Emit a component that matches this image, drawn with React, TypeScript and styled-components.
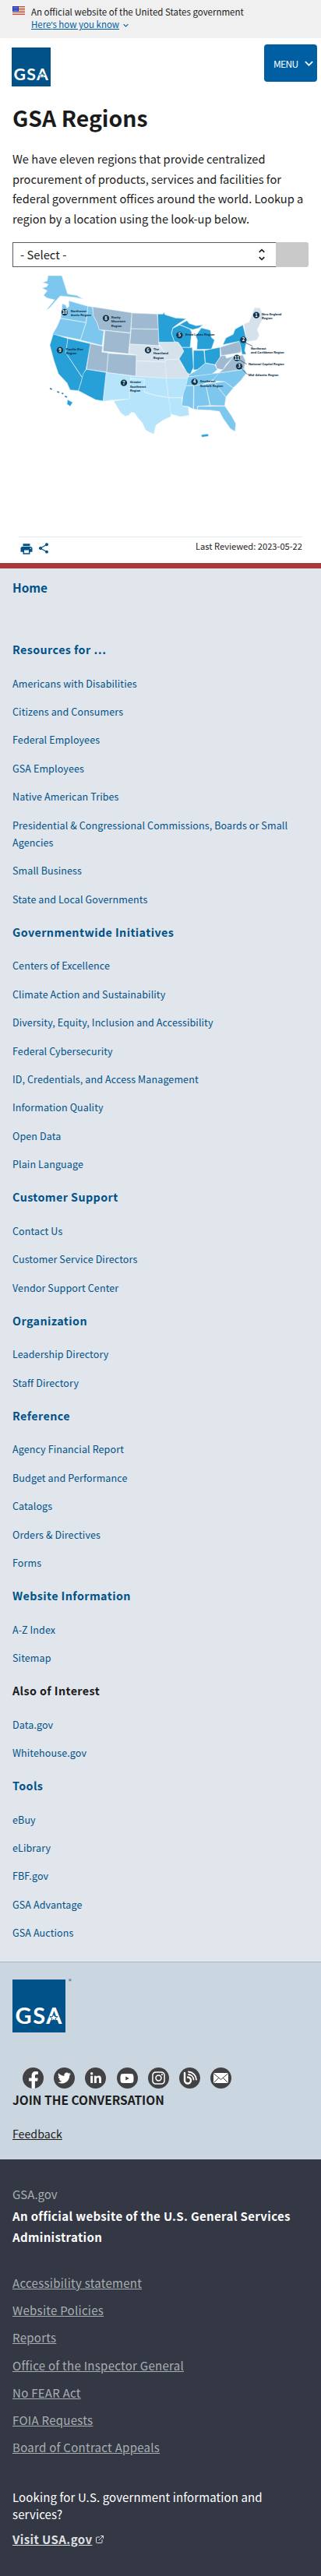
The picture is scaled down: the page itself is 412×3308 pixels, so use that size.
import React from "react";
import styled, { createGlobalStyle } from "styled-components";
import { MdPrint, MdShare, MdUnfoldMore, MdExpandMore } from "react-icons/md";
import { FaFacebookF, FaTwitter, FaLinkedinIn, FaYoutube, FaInstagram } from "react-icons/fa";
import { FiExternalLink } from "react-icons/fi";

const Global = createGlobalStyle`
  *{box-sizing:border-box}
  body{margin:0;background:#fff;color:#1b1b1b;font-family:"Noto Sans CJK SC","Noto Sans",sans-serif;}
  h1,h2,h3,p,ul{margin:0;padding:0}
  ul{list-style:none}
  a{color:inherit}
`;

const Banner = styled.header`
  height: 49px;
  background: #f0f0f0;
  padding: 7px 16px 0;
  display: flex;
  gap: 8px;
  font-size: 11.5px;
  line-height: 16.4px;
`;
const Flag = styled.svg`
  width: 16px;
  height: 11px;
  margin-top: 1px;
`;
const Know = styled.a`
  color: #005ea2;
  text-decoration: underline;
`;
const Apostrophe = styled.span`
  font-family: "Open Sans", sans-serif;
`;
const KnowRow = styled.div`
  display: flex;
  align-items: center;
  gap: 2px;
  color: #005ea2;
`;
const TopBar = styled.div`
  height: 71px;
  padding: 8px 5px 0 15px;
  display: flex;
  justify-content: space-between;
`;
const HeaderLogo = styled.div`
  margin-top: 4px;
`;
const MenuButton = styled.button`
  width: 68px;
  height: 48px;
  border: 0;
  border-radius: 4px;
  background: #005ea2;
  color: #fff;
  font: 12px "Noto Sans CJK SC", sans-serif;
  letter-spacing: -0.7px;
  display: flex;
  align-items: center;
  justify-content: space-between;
  padding: 0 0 0 12px;
`;
const Main = styled.main`
  padding: 11px 16px 0;
  height: 603px;
`;
const Title = styled.h1`
  font-size: 28.4px;
  line-height: 40px;
`;
const Intro = styled.p`
  font-size: 14.65px;
  line-height: 25.6px;
  margin-top: 20px;
`;
const Picker = styled.div`
  display: flex;
  margin-top: 17.6px;
  height: 32px;
`;
const Select = styled.div`
  flex: 1;
  border: 1px solid #565c65;
  border-right: 0;
  display: flex;
  align-items: center;
  justify-content: space-between;
  padding: 0 8px 0 9px;
  font-size: 14.8px;
`;
const Go = styled.div`
  width: 42px;
  background: #c9c9c9;
  border-radius: 0 3px 3px 0;
`;
const RegionMap = styled.svg`
  display: block;
  width: 340px;
  height: 224px;
  margin: 3px 0 0 24px;
`;
const PageMeta = styled.div`
  margin: 119px 8px 0;
  border-top: 1px solid #dfe9f0;
  padding: 3px 0 0;
  display: flex;
  justify-content: space-between;
  font-size: 11.15px;
  line-height: 16px;
  color: #1b1b1b;
`;
const Tools = styled.div`
  display: flex;
  gap: 5px;
  color: #005288;
  padding: 3px 0 0 1px;
`;
const Nav = styled.nav`
  border-top: 7px solid #a8363b;
  background: #e1e5ec;
  height: 1796px;
  padding: 12px 16px 0;
`;
const Home = styled.a`
  display: block;
  font-weight: 700;
  font-size: 15.4px;
  line-height: 24px;
  color: #005288;
  text-decoration: none;
  margin-bottom: 55px;
`;
const Group = styled.section`
  margin-bottom: 17.6px;
`;
const GroupTitle = styled.h2<{ $dark?: boolean }>`
  font-size: 14.3px;
  letter-spacing: 0.42px;
  line-height: 25.6px;
  margin-bottom: 20px;
  color: ${(p) => (p.$dark ? "#1b1b1b" : "#005288")};
`;
const Links = styled.ul`
  display: grid;
  gap: 14px;
  font-size: 12.5px;
  letter-spacing: 0.12px;
  line-height: 22.4px;
  color: #005288;
`;
const Social = styled.section`
  height: 254px;
  border-top: 1px solid #a9b4c2;
  background: #cad6e0;
  padding: 22px 16px 0;
  display: flex;
  flex-direction: column;
`;
const LogoRow = styled.div`
  display: flex;
  gap: 4px;
  font-size: 7px;
  font-weight: 700;
  line-height: 5px;
  color: #3c6f94;
`;
const Icons = styled.div`
  display: flex;
  gap: 13.2px;
  margin: 45px 0 0 13px;
`;
const Round = styled.span<{ $low?: boolean }>`
  width: 27px;
  height: 27px;
  border-radius: 50%;
  background: #424244;
  color: #fff;
  display: grid;
  justify-items: center;
  align-items: ${(p) => (p.$low ? "end" : "center")};
  overflow: hidden;
`;
const Join = styled.h3`
  font-size: 15.5px;
  line-height: 24px;
  margin-top: 2px;
`;
const Feedback = styled.a`
  font-size: 14.2px;
  line-height: 24px;
  margin-top: 20px;
`;
const Identifier = styled.footer`
  height: 535px;
  background: #343845;
  color: #fff;
  padding: 31px 16px 0;
  font-size: 15px;
  line-height: 27px;
`;
const Domain = styled.p`
  color: #a9aeb1;
`;
const Official = styled.p`
  font-weight: 700;
  letter-spacing: 0.34px;
  margin-top: 1px;
`;
const Required = styled.ul`
  display: grid;
  gap: 8.2px;
  margin-top: 32px;
  letter-spacing: 0.28px;
  color: #a9aeb1;
  a { text-decoration: underline; }
`;
const Usa = styled.p`
  margin-top: 40px;
  letter-spacing: 0.12px;
  line-height: 22px;
`;
const Visit = styled.a`
  display: flex;
  align-items: center;
  gap: 4px;
  margin-top: 7px;
  letter-spacing: 0.42px;
  color: #dfe1e2;
  b { text-decoration: underline; }
`;

const Logo = ({ size }: { size: number }) => (
  <svg width={size} height={size} viewBox="0 0 68 68">
    <rect width="68" height="68" fill="#005288" />
    <text x="3.5" y="57" fontFamily="Lato" fontWeight="700" fontSize="29" textLength="60" fill="#fff">GSA</text>
    <path transform="translate(53 49) scale(.85) translate(-53 -49)" d="M53 43l1.6 4.2 4.4.2-3.5 2.7 1.2 4.3-3.7-2.4-3.7 2.4 1.2-4.3-3.5-2.7 4.4-.2z" fill="#fff" stroke="#005288" strokeWidth="1.1" />
  </svg>
);

const REGION = { light: "#7dc6ed", grey: "#9fbad0", pale: "#d5e2ec", deep: "#279fd7", ice: "#b6e4fa" };
const STATES: [string, string][] = [
  [REGION.light, "65,42 118,42 140,112 152,115 175,118 200,132 172,126 135,122 112,120 98,135 72,165 58,175 85,142 90,135 62,128 48,118 62,100 42,90 60,85 66,75 44,68 62,62"],
  [REGION.light, "120,150 133,155 138,168 146,160 145,139 218,160 211,222 114,206"],
  [REGION.light, "113,207 211,223 190,289 82,268 100,238"],
  [REGION.light, "218,160 236,163 240,198 254,222 262,250 280,255 273,311 190,290 212,223"],
  [REGION.grey, "237,162 388,185 382,262 284,252 262,250 254,222 240,198"],
  [REGION.grey, "388,186 485,190 490,248 385,246"],
  [REGION.grey, "385,247 490,249 492,311 380,305"],
  [REGION.grey, "284,253 382,264 375,343 277,333"],
  [REGION.grey, "228,304 275,314 272,336 297,340 291,413 213,402"],
  [REGION.grey, "297,341 405,349 403,429 291,415"],
  [REGION.pale, "380,306 492,312 508,330 520,374 405,370 405,347 377,343"],
  [REGION.pale, "405,371 520,375 520,437 403,430"],
  [REGION.pale, "490,300 565,297 588,332 570,362 516,366 508,330"],
  [REGION.pale, "516,367 570,363 585,395 608,420 602,440 520,437"],
  [REGION.deep, "85,267 141,284 134,340 197,436 193,450 182,485 150,482 138,455 105,420 88,370 72,310"],
  [REGION.deep, "141,284 228,304 211,403 204,415 197,434 134,340"],
  [REGION.deep, "213,403 289,415 277,525 248,520 182,485 193,450 200,420"],
  [REGION.ice, "289,415 384,428 378,517 312,521 277,526"],
  [REGION.ice, "384,429 520,437 529,511 480,503 435,490 435,441 384,438"],
  [REGION.ice, "384,440 435,442 435,491 480,504 529,512 540,545 537,585 505,600 480,618 472,652 455,645 440,635 428,608 410,588 398,570 385,568 376,580 362,583 345,570 340,562 318,525 378,517"],
  [REGION.ice, "520,437 608,436 600,470 580,512 529,512"],
  [REGION.ice, "530,513 580,513 582,545 605,548 608,580 575,585 538,575"],
  [REGION.deep, "487,190 508,190 511,182 515,192 555,205 597,208 565,228 545,243 540,265 552,298 492,298"],
  [REGION.deep, "545,245 572,232 612,248 618,260 612,318 580,318 566,298 552,296 541,266"],
  [REGION.deep, "572,230 600,215 608,226 635,235 662,232 645,244 622,250 612,247"],
  [REGION.deep, "655,243 690,252 694,280 706,290 694,325 638,326 640,290 634,275"],
  [REGION.deep, "580,319 620,319 625,395 612,423 600,415 570,362 588,333"],
  [REGION.deep, "625,330 665,330 670,380 640,404 625,405"],
  [REGION.deep, "667,330 727,318 728,355 708,385 671,378"],
  [REGION.light, "608,424 640,405 671,379 708,386 716,405 695,422 605,432"],
  [REGION.light, "604,433 735,415 690,450 655,462 596,466"],
  [REGION.light, "596,467 626,465 624,556 605,546 580,543 585,500"],
  [REGION.light, "627,465 672,460 688,542 640,545 640,558 626,556"],
  [REGION.light, "672,459 705,455 750,510 745,543 690,542"],
  [REGION.light, "705,455 745,450 778,475 750,509"],
  [REGION.light, "697,447 722,417 822,403 828,418 808,445 778,474 745,450"],
  [REGION.light, "642,546 746,545 770,580 788,612 785,642 768,632 738,590 725,565 690,560 640,558"],
  [REGION.grey, "728,318 800,295 812,315 806,338 732,350"],
  [REGION.grey, "732,350 748,350 752,360 780,352 750,385 738,405 715,400 710,382"],
  [REGION.grey, "780,352 815,348 825,370 820,402 722,417 740,403"],
  [REGION.deep, "738,308 750,282 778,268 785,248 815,232 830,290 822,330 828,345 812,345 806,310 800,295"],
  [REGION.pale, "820,228 838,222 852,190 860,166 880,166 895,200 870,250 878,272 868,290 828,297"],
  [REGION.deep, "140,520 160,530 150,545 138,537"],
  [REGION.deep, "655,655 682,652 682,661 657,664"],
];
const MARKS: [string, number, number, number, number, string[]][] = [
  ["10", 129, 183, 152, 182, ["Northwest", "Arctic Region"]],
  ["8", 288, 206, 308, 206, ["Rocky", "Mountain", "Region"]],
  ["1", 867, 194, 888, 194, ["New England", "Region"]],
  ["5", 571, 271, 593, 273, ["Great Lakes Region"]],
  ["2", 817, 289, 846, 326, ["Northeast", "and Caribbean Region"]],
  ["6", 450, 329, 470, 329, ["The", "Heartland", "Region"]],
  ["9", 111, 329, 134, 329, ["Pacific Rim", "Region"]],
  ["11", 792, 359, 837, 387, ["National Capital Region"]],
  ["3", 801, 391, 836, 429, ["Mid-Atlantic Region"]],
  ["4", 629, 451, 650, 453, ["Southeast", "Sunbelt Region"]],
  ["7", 357, 455, 380, 456, ["Greater", "Southwest", "Region"]],
];

const GROUPS: { title: string; dark?: boolean; links: string[] }[] = [
  { title: "Resources for …", links: ["Americans with Disabilities", "Citizens and Consumers", "Federal Employees", "GSA Employees", "Native American Tribes", "Presidential & Congressional Commissions, Boards or Small Agencies", "Small Business", "State and Local Governments"] },
  { title: "Governmentwide Initiatives", links: ["Centers of Excellence", "Climate Action and Sustainability", "Diversity, Equity, Inclusion and Accessibility", "Federal Cybersecurity", "ID, Credentials, and Access Management", "Information Quality", "Open Data", "Plain Language"] },
  { title: "Customer Support", links: ["Contact Us", "Customer Service Directors", "Vendor Support Center"] },
  { title: "Organization", links: ["Leadership Directory", "Staff Directory"] },
  { title: "Reference", links: ["Agency Financial Report", "Budget and Performance", "Catalogs", "Orders & Directives", "Forms"] },
  { title: "Website Information", links: ["A-Z Index", "Sitemap"] },
  { title: "Also of Interest", dark: true, links: ["Data.gov", "Whitehouse.gov"] },
  { title: "Tools", links: ["eBuy", "eLibrary", "FBF.gov", "GSA Advantage", "GSA Auctions"] },
];
const REQUIRED = ["Accessibility statement", "Website Policies", "Reports", "Office of the Inspector General", "No FEAR Act", "FOIA Requests", "Board of Contract Appeals"];

export default function App() {
  return (
    <>
      <Global />
      <Banner>
        <Flag viewBox="0 0 16 11">
          <rect width="16" height="11" fill="#fff" />
          {[0, 2, 4, 6, 8, 10].map((y) => <rect key={y} y={y} width="16" height="1" fill="#db3e1f" />)}
          <rect width="8" height="7" fill="#1e33b1" />
          {[1, 3, 5].map((y) => [1, 3, 5].map((x) => <rect key={`${x}${y}`} x={x + 0.5} y={y} width="1" height="1" fill="#c7cdf0" />))}
        </Flag>
        <div>
          <div>An official website of the United States government</div>
          <KnowRow><Know>Here<Apostrophe>’</Apostrophe>s how you know</Know><MdExpandMore size={13} /></KnowRow>
        </div>
      </Banner>
      <TopBar>
        <HeaderLogo><Logo size={50} /></HeaderLogo>
        <MenuButton>MENU<MdExpandMore size={21} /></MenuButton>
      </TopBar>
      <Main>
        <Title>GSA Regions</Title>
        <Intro>We have eleven regions that provide centralized procurement of products, services and facilities for federal government offices around the world. Lookup a region by a location using the look-up below.</Intro>
        <Picker><Select><span>- Select -</span><MdUnfoldMore size={20} /></Select><Go /></Picker>
        <RegionMap viewBox="0 18 1020 672">
          {STATES.map(([fill, points], i) => <polygon key={i} points={points} fill={fill} stroke="#e6f3fb" strokeWidth="1.6" />)}
          <path d="M72 476l8 4M100 488l8 4M118 494l6 3M130 506l8 4" stroke="#3b7fa8" strokeWidth="5" />
          <path d="M825 300l28 14M800 365l30 18M808 398l26 26" stroke="#12344d" strokeWidth="2" />
          {MARKS.map(([num, cx, cy, x, y, lines]) => (
            <g key={num}>
              <circle cx={cx} cy={cy} r="12.5" fill="#12344d" />
              <text x={cx} y={cy + 6} textAnchor="middle" fontSize="17" fontWeight="700" fill="#fff">{num}</text>
              {lines.map((l, i) => <text key={l} x={x} y={y + i * 17} fontSize="13" fontFamily="Roboto" fontWeight="700" fill="#12344d">{l}</text>)}
            </g>
          ))}
        </RegionMap>
        <PageMeta><Tools><MdPrint size={18} /><MdShare size={16} /></Tools><span>Last Reviewed: 2023-05-22</span></PageMeta>
      </Main>
      <Nav>
        <Home>Home</Home>
        {GROUPS.map((g) => (
          <Group key={g.title}>
            <GroupTitle $dark={g.dark}>{g.title}</GroupTitle>
            <Links>{g.links.map((l) => <li key={l}>{l}</li>)}</Links>
          </Group>
        ))}
      </Nav>
      <Social>
        <LogoRow><Logo size={68} />®</LogoRow>
        <Icons>
          <Round $low><FaFacebookF size={22} /></Round>
          <Round><FaTwitter size={17} /></Round>
          <Round><FaLinkedinIn size={16} /></Round>
          <Round><FaYoutube size={18} /></Round>
          <Round><FaInstagram size={19} /></Round>
          <Round>
            <svg width="21" height="21" viewBox="0 0 21 21" fill="none" stroke="#fff" strokeWidth="2.4" strokeLinecap="round"><path d="M4 4v9.5a4 4 0 1 0 4-4" /><path d="M9 6a7 7 0 0 1 6.5 6.5M9 2.5a10.5 10.5 0 0 1 10 10" strokeWidth="1.8" /></svg>
          </Round>
          <Round>
            <svg width="19" height="13" viewBox="0 0 19 13"><rect width="19" height="13" rx="1" fill="#fff" /><path d="M0 .5l9.5 8 9.5-8M.5 12.5l6.5-6.5M18.5 12.5l-6.5-6.5" fill="none" stroke="#424244" /></svg>
          </Round>
        </Icons>
        <Join>JOIN THE CONVERSATION</Join>
        <Feedback href="#">Feedback</Feedback>
      </Social>
      <Identifier>
        <Domain>GSA.gov</Domain>
        <Official>An official website of the U.S. General Services Administration</Official>
        <Required>{REQUIRED.map((l) => <li key={l}><a>{l}</a></li>)}</Required>
        <Usa>Looking for U.S. government information and services?</Usa>
        <Visit><b>Visit USA.gov</b><FiExternalLink size={12} /></Visit>
      </Identifier>
    </>
  );
}
